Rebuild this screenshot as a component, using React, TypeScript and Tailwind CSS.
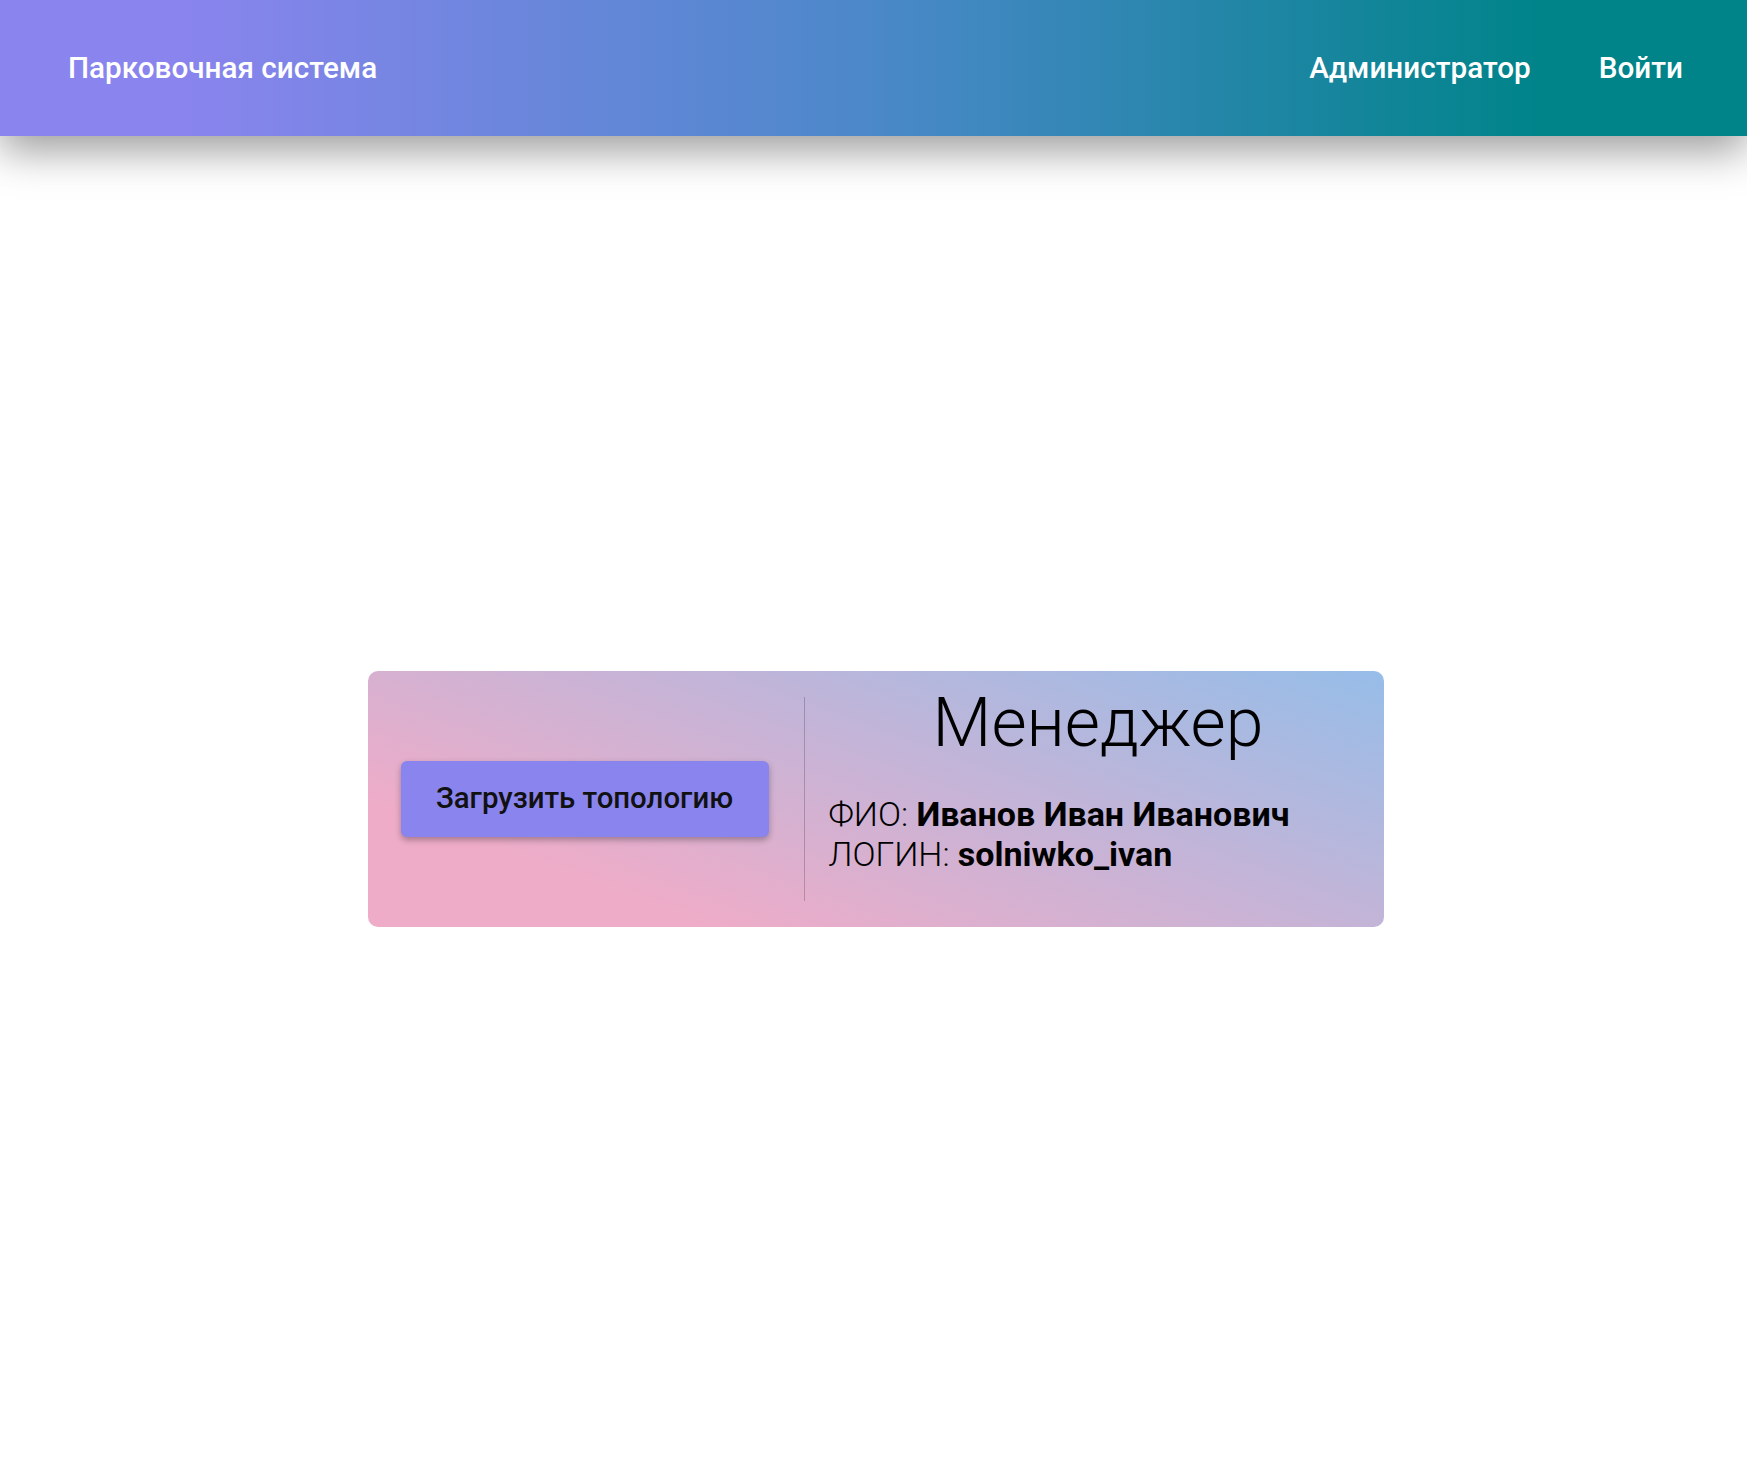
const Header = () => {
  return (
    <header className="relative z-10 flex h-[136px] w-full items-center justify-between bg-[linear-gradient(to_right,#8a84ee_10%,#4b88c9_50%,#00848a_88%)] pl-[68px] pr-[64px] shadow-[0_14px_40px_rgba(0,0,0,0.4)]">
      <a href="#" className="text-[29.7px] font-medium text-white no-underline">
        Парковочная система
      </a>
      <nav className="flex items-center gap-[68px]">
        <a href="#" className="text-[29.7px] font-medium text-white no-underline">
          Администратор
        </a>
        <a href="#" className="text-[29.7px] font-medium text-white no-underline">
          Войти
        </a>
      </nav>
    </header>
  );
};

const ManagerCard = () => {
  return (
    <div className="flex w-[1016px] rounded-[10px] bg-[linear-gradient(20deg,#eeacc8_20%,#96bde8_100%)] py-[26px]">
      <div className="flex h-[204px] w-full items-stretch">
        <div className="flex items-center pl-[33px] pr-[35px]">
          <button
            type="button"
            className="h-[76px] w-[368px] rounded-md bg-[#8a84ee] text-[29.4px] font-medium text-[#111] shadow-[0_3px_6px_rgba(0,0,0,0.3)]"
          >
            Загрузить топологию
          </button>
        </div>
        <div className="flex flex-1 flex-col border-l border-black/20 pl-[24px] pr-[16px]">
          <h2 className="text-center text-[68px] font-light leading-[52px] text-black">Менеджер</h2>
          <div className="mt-[45px] text-[34px] leading-[40px] text-black">
            <p>
              <span className="font-light">ФИО: </span>
              <span className="font-bold">Иванов Иван Иванович</span>
            </p>
            <p>
              <span className="font-light">ЛОГИН: </span>
              <span className="font-bold">solniwko_ivan</span>
            </p>
          </div>
        </div>
      </div>
    </div>
  );
};

export default function App() {
  return (
    <div className="flex min-h-screen flex-col bg-white font-['Roboto',sans-serif]">
      <Header />
      <main className="flex flex-1 items-center justify-center pl-[4px]">
        <ManagerCard />
      </main>
    </div>
  );
}
